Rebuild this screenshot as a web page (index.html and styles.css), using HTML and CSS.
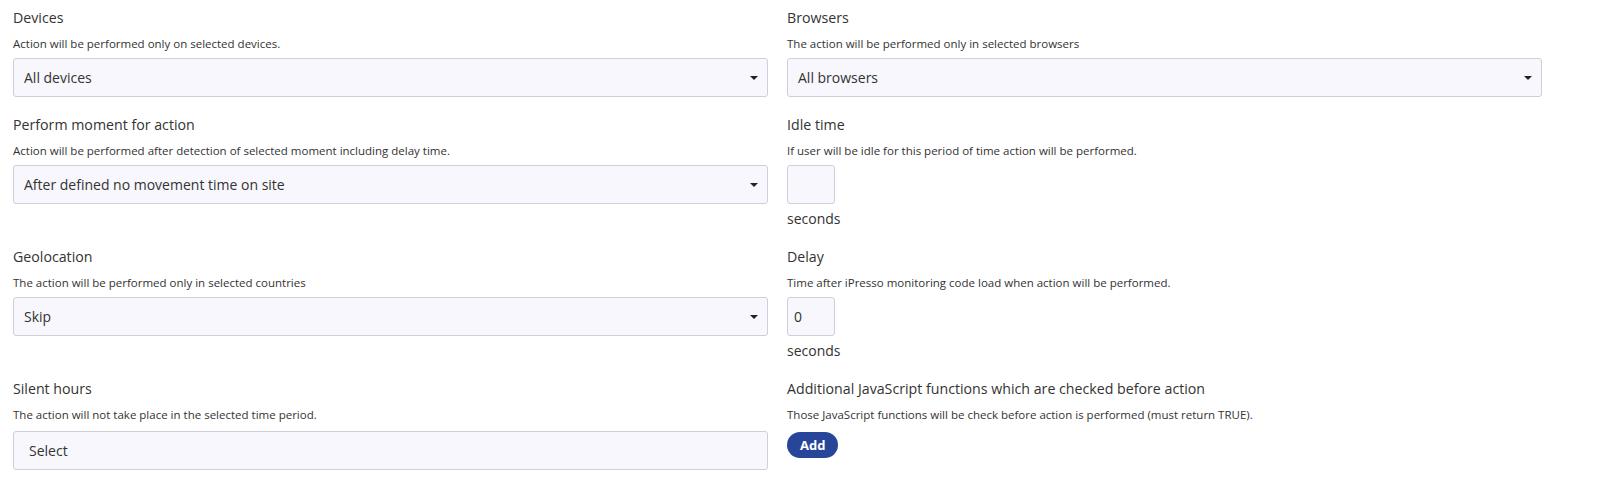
FILE: index.html
```html
<!DOCTYPE html>
<html lang="en">
<head>
  <meta charset="UTF-8">
  <title>Action settings</title>
  <link rel="stylesheet" href="styles.css">
</head>
<body>

  <div class="settings">
    <div class="field">
      <div class="field-label">Devices</div>
      <div class="field-desc">Action will be performed only on selected devices.</div>
      <div class="select"><span>All devices</span><i class="caret"></i></div>
    </div>
    <div class="field">
      <div class="field-label">Browsers</div>
      <div class="field-desc">The action will be performed only in selected browsers</div>
      <div class="select"><span>All browsers</span><i class="caret"></i></div>
    </div>

    <div class="field">
      <div class="field-label">Perform moment for action</div>
      <div class="field-desc">Action will be performed after detection of selected moment including delay time.</div>
      <div class="select"><span>After defined no movement time on site</span><i class="caret"></i></div>
    </div>
    <div class="field">
      <div class="field-label">Idle time</div>
      <div class="field-desc">If user will be idle for this period of time action will be performed.</div>
      <input class="small-input" type="text" value="">
      <div class="unit">seconds</div>
    </div>

    <div class="field">
      <div class="field-label">Geolocation</div>
      <div class="field-desc">The action will be performed only in selected countries</div>
      <div class="select"><span>Skip</span><i class="caret"></i></div>
    </div>
    <div class="field">
      <div class="field-label">Delay</div>
      <div class="field-desc">Time after iPresso monitoring code load when action will be performed.</div>
      <input class="small-input" type="text" value="0">
      <div class="unit">seconds</div>
    </div>

    <div class="field">
      <div class="field-label">Silent hours</div>
      <div class="field-desc">The action will not take place in the selected time period.</div>
      <div class="select multi"><span>Select</span></div>
    </div>
    <div class="field">
      <div class="field-label">Additional JavaScript functions which are checked before action</div>
      <div class="field-desc">Those JavaScript functions will be check before action is performed (must return TRUE).</div>
      <div><button class="add-btn">Add</button></div>
    </div>
  </div>

</body>
</html>
```

FILE: styles.css
```css
html {
    box-sizing: border-box;
    background: #fff;
  }

  *, *:before, *:after {
    box-sizing: inherit;
  }

  body {
    margin: 0;
    padding: 8px 0 0 13px;
    font-family: "Open Sans", Arial, sans-serif;
    color: #333;
  }

  .settings {
    display: grid;
    grid-template-columns: 755px 755px;
    column-gap: 19px;
    row-gap: 18px;
  }

  .field {
    display: flex;
    flex-direction: column;
    align-items: flex-start;
  }

  .field-label {
    font-size: 14.2px;
    line-height: 20px;
  }

  .field-desc {
    margin-top: 9px;
    margin-bottom: 7px;
    font-size: 11.5px;
    line-height: 14px;
  }

  .select {
    width: 100%;
    height: 39px;
    display: flex;
    align-items: center;
    justify-content: space-between;
    padding: 0 9px 0 10px;
    background: #f7f7fd;
    border: 1px solid #cdd0da;
    border-radius: 3px;
    font-size: 14px;
  }

  .select.multi {
    margin-top: 2px;
    padding-left: 15px;
  }

  .caret {
    width: 0;
    height: 0;
    border-left: 4.5px solid transparent;
    border-right: 4.5px solid transparent;
    border-top: 4.5px solid #222;
  }

  .small-input {
    width: 48px;
    height: 39px;
    padding: 0 6px;
    background: #f7f7fd;
    border: 1px solid #cdd0da;
    border-radius: 3px;
    font-family: inherit;
    font-size: 14px;
    color: #333;
    outline: 0;
  }

  .unit {
    margin-top: 5px;
    font-size: 14px;
    line-height: 20px;
  }

  .add-btn {
    margin-top: 3px;
    height: 26px;
    padding: 0 13px;
    border: none;
    border-radius: 13px;
    background: #27469a;
    color: #fff;
    font-family: inherit;
    font-weight: 700;
    font-size: 13px;
    cursor: pointer;
  }
```
